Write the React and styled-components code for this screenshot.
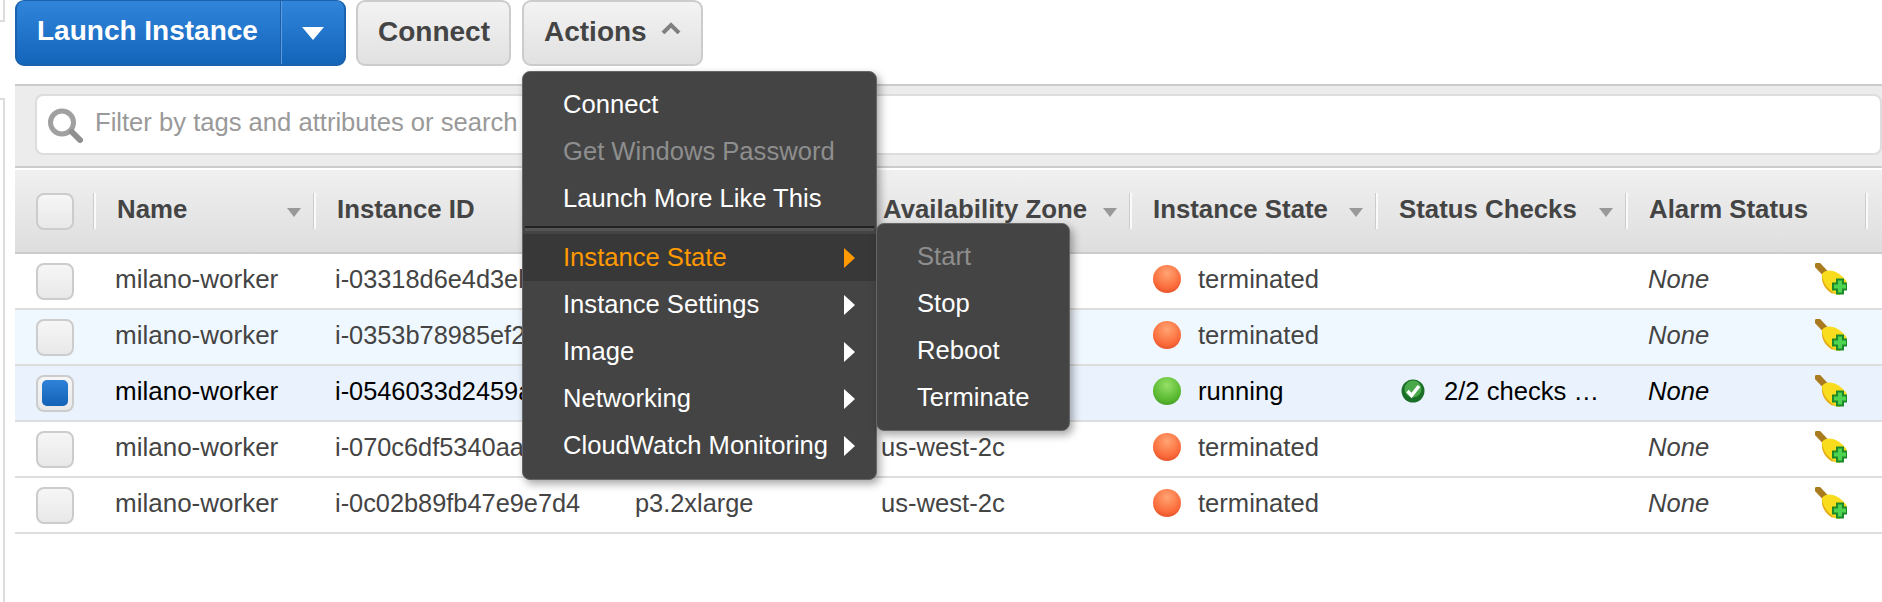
import React from 'react';
import styled, { createGlobalStyle } from 'styled-components';

const GlobalStyle = createGlobalStyle`
    html, body {
        margin: 0;
        height: 100%;
        overflow: hidden;
        background: #fff;
        font-family: "Liberation Sans", Arial, sans-serif;
        font-size: 25.6px;
        color: #444;
    }
`;

const COLUMNS = '80px 220px 300px 245px 271px 246px 250px 240px 1fr';

const instances = [
    { id: 'i-03318d6e4d3eb', state: 'terminated' },
    { id: 'i-0353b78985ef2', state: 'terminated', tint: '#f0f8ff' },
    { id: 'i-0546033d2459a', state: 'running', checks: '2/2 checks …', tint: '#e9f2fd', selected: true },
    { id: 'i-070c6df5340aa', state: 'terminated', zone: 'us-west-2c' },
    { id: 'i-0c02b89fb47e9e7d4', state: 'terminated', type: 'p3.2xlarge', zone: 'us-west-2c' },
];

const SearchIcon = () => (
    <SoftIcon width="38" height="38" viewBox="0 0 38 38">
        <circle cx="15" cy="16.5" r="11.5" fill="none" stroke="#a0a0a0" strokeWidth="5" />
        <path d="M25 26 L33 34" stroke="#8f8f8f" strokeWidth="6" strokeLinecap="round" />
    </SoftIcon>
);

const CheckIcon = () => (
    <SoftIcon width="24" height="24" viewBox="0 0 24 24">
        <circle cx="12" cy="12" r="11.5" fill="#1c6f28" />
        <circle cx="12" cy="10" r="8.5" fill="#48a84a" />
        <path d="M6.5 12 L10.5 16.5 L18 7" fill="none" stroke="#fff" strokeWidth="3.4" />
    </SoftIcon>
);

const BroomIcon = () => (
    <SoftIcon width="32" height="32" viewBox="0 0 32 32">
        <path d="M3 2.5 L10 10" stroke="#a97a1e" strokeWidth="6.5" strokeLinecap="round" />
        <path d="M7 11 C12 4 25 8 32 19 L25 32 C14 31 6 22 7 11 Z" fill="#f9dc1e" />
        <path d="M7 12 C8 20 13 27 21 31 L16 30 C10 26 6 19 7 12 Z" fill="#e3ab1a" />
        <path d="M21 17 h8 v4 h4 v8 h-4 v4 h-8 v-4 h-4 v-8 h4 z" fill="#1c8a28" transform="translate(0 -1.5)" />
        <path d="M23 19 h4 v4 h4 v4 h-4 v4 h-4 v-4 h-4 v-4 h4 z" fill="#4fd452" transform="translate(0 -1.5)" />
    </SoftIcon>
);

const App = () => {
    return (
        <React.Fragment>
            <GlobalStyle />
            <Page>
                <Rail>
                    <RailTop />
                    <RailBottom />
                </Rail>
                <Main>
                    <Toolbar>
                        <LaunchButton>
                            <LaunchLabel>Launch Instance</LaunchLabel>
                            <LaunchCaret />
                        </LaunchButton>
                        <GreyButton $width={155}>Connect</GreyButton>
                        <ActionsWrap>
                            <GreyButton $width={181}>
                                Actions
                                <Chevron viewBox="0 0 20 12">
                                    <path d="M2 11 L10 3 L18 11" fill="none" stroke="#808080" strokeWidth="4" />
                                </Chevron>
                            </GreyButton>
                            <Menu>
                                <MenuItem>Connect</MenuItem>
                                <MenuItem $disabled>Get Windows Password</MenuItem>
                                <MenuItem>Launch More Like This</MenuItem>
                                <MenuDivider />
                                <MenuItem $active>
                                    Instance State
                                    <SubArrow $active />
                                    <SubMenu>
                                        <SubItem $disabled>Start</SubItem>
                                        <SubItem>Stop</SubItem>
                                        <SubItem>Reboot</SubItem>
                                        <SubItem>Terminate</SubItem>
                                    </SubMenu>
                                </MenuItem>
                                <MenuItem>Instance Settings<SubArrow /></MenuItem>
                                <MenuItem>Image<SubArrow /></MenuItem>
                                <MenuItem>Networking<SubArrow /></MenuItem>
                                <MenuItem>CloudWatch Monitoring<SubArrow /></MenuItem>
                            </Menu>
                        </ActionsWrap>
                    </Toolbar>

                    <FilterBar>
                        <FilterInput>
                            <SearchIcon />
                            <Placeholder>Filter by tags and attributes or search</Placeholder>
                        </FilterInput>
                    </FilterBar>

                    <HeaderRow>
                        <CheckCell><CheckBox /></CheckCell>
                        <HeaderCell>Name<SortArrow /></HeaderCell>
                        <HeaderCell>Instance ID</HeaderCell>
                        <HeaderCell />
                        <HeaderCell $nudge>Availability Zone<SortArrow /></HeaderCell>
                        <HeaderCell>Instance State<SortArrow /></HeaderCell>
                        <HeaderCell>Status Checks<SortArrow /></HeaderCell>
                        <HeaderCell>Alarm Status</HeaderCell>
                        <HeaderCell />
                    </HeaderRow>

                    {instances.map((l) => {
                        return (
                            <Row key={l.id} $tint={l.tint} $selected={l.selected}>
                                <CheckCell>
                                    <CheckBox>{l.selected && <CheckFill />}</CheckBox>
                                </CheckCell>
                                <NameCell>milano-worker</NameCell>
                                <IdCell>{l.id}</IdCell>
                                <IdCell>{l.type}</IdCell>
                                <Cell>{l.zone}</Cell>
                                <StateCell>
                                    <Dot $running={l.state === 'running'} />
                                    {l.state}
                                </StateCell>
                                <StatusCell>
                                    {l.checks && <CheckIcon />}
                                    {l.checks}
                                </StatusCell>
                                <AlarmCell>
                                    <em>None</em>
                                    <BroomIcon />
                                </AlarmCell>
                                <Cell />
                            </Row>
                        );
                    })}
                </Main>
            </Page>
        </React.Fragment>
    );
};

const Page = styled.div`
    display: flex;
    height: 602px;
    overflow: hidden;
`;

const Rail = styled.div`
    width: 5px;
    flex: none;
    display: flex;
    flex-direction: column;
    justify-content: space-between;
`;

const RailTop = styled.div`
    height: 20px;
    border-right: 2px solid #ddd;
    border-bottom: 2px solid #ddd;
`;

const RailBottom = styled.div`
    height: 502px;
    border-right: 2px solid #ddd;
    border-top: 2px solid #ddd;
`;

const Main = styled.div`
    flex: 1;
    min-width: 0;
    padding-left: 10px;
`;

const Toolbar = styled.div`
    display: flex;
    gap: 10px;
    height: 66px;
    margin-bottom: 18px;
    font-size: 28px;
`;

const LaunchButton = styled.div`
    width: 331px;
    box-sizing: border-box;
    display: flex;
    border: 2px solid #1a62ad;
    border-top-width: 1px;
    border-radius: 9px;
    background: linear-gradient(#3085db, #1365ba);
    color: #fff;
    font-weight: bold;
`;

const LaunchLabel = styled.div`
    width: 264px;
    box-sizing: border-box;
    padding-left: 20px;
    line-height: 60px;
    border-right: 1px solid #1a5fa8;
    box-shadow: 1px 0 0 #5c9be0;
    white-space: nowrap;
`;

const LaunchCaret = styled.div`
    margin: 26px 0 0 21px;
    width: 0;
    height: 0;
    border-left: 11px solid transparent;
    border-right: 11px solid transparent;
    border-top: 13px solid #fff;
`;

const GreyButton = styled.div`
    width: ${(p) => p.$width}px;
    height: 66px;
    box-sizing: border-box;
    display: flex;
    justify-content: flex-start;
    gap: 14px;
    padding-left: 20px;
    border: 2px solid #ccc;
    border-radius: 9px;
    background: linear-gradient(#f3f3f3, #e1e1e1);
    font-weight: bold;
    line-height: 60px;
    color: #444;
`;

const Chevron = styled.svg`
    width: 20px;
    height: 12px;
    margin-top: 20px;
`;

const ActionsWrap = styled.div`
    position: relative;
    margin-left: 1px;
`;

const Menu = styled.div`
    position: absolute;
    z-index: 10;
    top: 71px;
    left: 0;
    width: 355px;
    box-sizing: border-box;
    padding: 9px 0 10px;
    background: #444;
    border: 1px solid #666;
    border-radius: 8px;
    box-shadow: 3px 4px 8px rgba(0, 0, 0, 0.35);
    font-size: 25.6px;
    font-weight: normal;
`;

const MenuItem = styled.div`
    position: relative;
    height: 47px;
    line-height: 47px;
    padding-left: 40px;
    color: ${(p) => (p.$active ? '#ff9900' : p.$disabled ? '#8e8e8e' : '#fff')};
    background: ${(p) => (p.$active ? '#383838' : 'none')};
`;

const MenuDivider = styled.div`
    height: 2px;
    margin: 4px 2px 3px;
    background: #222;
    border-bottom: 3px solid #555;
`;

const SubArrow = styled.span`
    position: absolute;
    right: 21px;
    top: 14px;
    width: 0;
    height: 0;
    border-top: 10px solid transparent;
    border-bottom: 10px solid transparent;
    border-left: 11px solid ${(p) => (p.$active ? '#ff9900' : '#fff')};
`;

const SubMenu = styled.div`
    position: absolute;
    z-index: 11;
    top: -11px;
    left: 353px;
    width: 194px;
    box-sizing: border-box;
    padding: 9px 0 9px;
    background: #444;
    border-radius: 8px;
    border: 1px solid #666;
    box-shadow: 3px 4px 8px rgba(0, 0, 0, 0.35);
`;

const SubItem = styled.div`
    height: 47px;
    line-height: 47px;
    padding-left: 40px;
    color: ${(p) => (p.$disabled ? '#8e8e8e' : '#fff')};
`;

const FilterBar = styled.div`
    height: 84px;
    box-sizing: border-box;
    padding: 8px 0 0 20px;
    background: #ececec;
    border-top: 2px solid #ccc;
    border-bottom: 2px solid #ccc;
    margin-bottom: 2px;
`;

const FilterInput = styled.div`
    height: 61px;
    box-sizing: border-box;
    display: flex;
    align-items: center;
    gap: 10px;
    padding: 0 0 0 10px;
    background: #fff;
    border: 2px solid #ddd;
    border-radius: 8px;
`;

const SoftIcon = styled.svg`
    flex: none;
    filter: blur(0.5px);
`;

const Placeholder = styled.span`
    color: #999;
    white-space: nowrap;
    padding-bottom: 4px;
`;

const HeaderRow = styled.div`
    display: grid;
    grid-template-columns: ${COLUMNS};
    height: 84px;
    box-sizing: border-box;
    background: linear-gradient(#f0f0f0, #dedede);
    border-bottom: 2px solid #ccc;
`;

const HeaderCell = styled.div`
    height: 36px;
    margin: 23px 0 0 -1px;
    box-sizing: border-box;
    display: flex;
    align-items: center;
    justify-content: space-between;
    padding: 0 14px 4px ${(p) => (p.$nudge ? 22 : 21)}px;
    border-left: 2px solid #fafafa;
    box-shadow: -1px 0 0 #ccc;
    font-size: 25.8px;
    font-weight: bold;
    line-height: 32px;
    white-space: nowrap;
    color: #444;
`;

const SortArrow = styled.span`
    width: 0;
    height: 0;
    margin-top: 6px;
    border-left: 7px solid transparent;
    border-right: 7px solid transparent;
    border-top: 9px solid #999;
`;

const Row = styled.div`
    display: grid;
    grid-template-columns: ${COLUMNS};
    height: 56px;
    box-sizing: border-box;
    background: ${(p) => p.$tint || '#fff'};
    border-bottom: 2px solid #ddd;
    color: ${(p) => (p.$selected ? '#000' : '#444')};
`;

const CheckCell = styled.div`
    display: flex;
    align-items: center;
    padding-left: 21px;
`;

const CheckBox = styled.div`
    width: 38px;
    height: 37px;
    box-sizing: border-box;
    display: flex;
    align-items: center;
    justify-content: center;
    border: 2px solid #ccc;
    border-radius: 8px;
    background: linear-gradient(#f6f6f6, #e8e8e8);
`;

const CheckFill = styled.div`
    width: 26px;
    height: 26px;
    border-radius: 5px;
    background: linear-gradient(#2f82d8, #1262b6);
`;

const Cell = styled.div`
    display: flex;
    align-items: center;
    padding: 0 0 4px 21px;
    white-space: nowrap;
`;

const NameCell = styled(Cell)`
    padding-left: 20px;
    font-size: 26px;
`;

const IdCell = styled(Cell)`
    padding-left: 20px;
    font-size: 25.35px;
`;

const StateCell = styled(Cell)`
    padding-left: 22px;
    gap: 17px;
`;

const StatusCell = styled(Cell)`
    padding-left: 24px;
    gap: 19px;
`;

const AlarmCell = styled(Cell)`
    justify-content: space-between;
    padding-right: 20px;
`;

const Dot = styled.span`
    width: 28px;
    height: 28px;
    border-radius: 50%;
    background: ${(p) =>
        p.$running
            ? 'radial-gradient(circle at 50% 30%, #96e068, #58b82f 62%, #3a8a1f)'
            : 'radial-gradient(circle at 50% 30%, #ffa573, #fb6a3a 62%, #d2421f)'};
`;

export default App;
